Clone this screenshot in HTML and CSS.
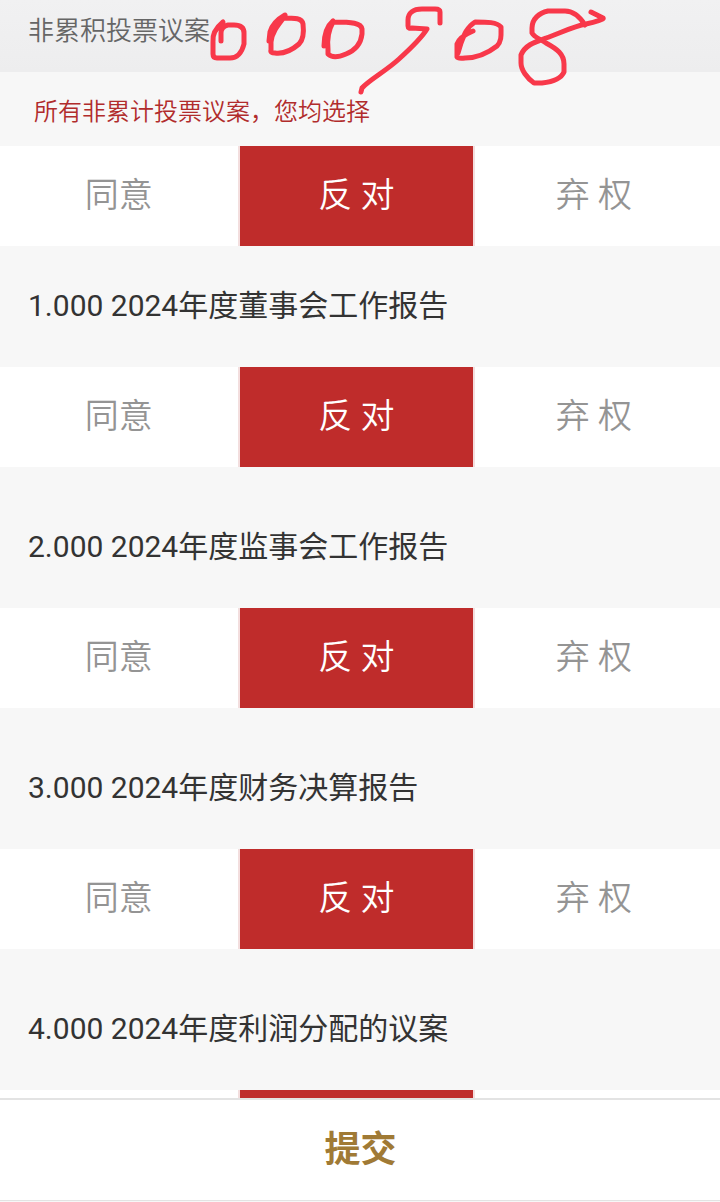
FILE: index.html
```html
<!DOCTYPE html>
<html lang="zh-CN">
<head>
    <meta charset="UTF-8">
    <meta name="viewport" content="width=device-width, initial-scale=1.0">
    <title>非累积投票议案</title>
    <link rel="stylesheet" href="styles.css">
</head>
<body>

    <div class="page">
        <div class="header">非累积投票议案</div>
        <div class="notice">所有非累计投票议案，您均选择</div>

        <div class="options">
            <div class="option">同意</div>
            <div class="option selected">反 对</div>
            <div class="option">弃 权</div>
        </div>

        <div class="title first">1.000 2024年度董事会工作报告</div>
        <div class="options">
            <div class="option">同意</div>
            <div class="option selected">反 对</div>
            <div class="option">弃 权</div>
        </div>

        <div class="title">2.000 2024年度监事会工作报告</div>
        <div class="options">
            <div class="option">同意</div>
            <div class="option selected">反 对</div>
            <div class="option">弃 权</div>
        </div>

        <div class="title">3.000 2024年度财务决算报告</div>
        <div class="options">
            <div class="option">同意</div>
            <div class="option selected">反 对</div>
            <div class="option">弃 权</div>
        </div>

        <div class="title">4.000 2024年度利润分配的议案</div>
        <div class="options cut">
            <div class="option"></div>
            <div class="option selected"></div>
            <div class="option"></div>
        </div>

        <div class="submit">提交</div>

        <!-- 手写标记 -->
        <svg class="mark" width="720" height="110" viewBox="0 0 720 110">
            <path d="M223 22 C217 27 212 34 213 42 L213 54 Q213 58 217 58 L230 58 C238 58 242 52 244 44 L244 33 C244 27 240 25 234 25 L228 25 C223 26 221 29 221 33 L221 41"/>
            <path d="M285 15 C278 19 272 25 270 32 L269 41 M285 16 C278 25 272 32 271 42 L271 50 Q270 53 275 53 C283 54 291 51 299 44 C304 39 304 32 303 24 C302 18 296 18 281 18"/>
            <path d="M333 21 C326 27 324 35 324 46 M333 22 C328 31 327 40 328 49 L328 54 C332 58 339 57 346 54 C356 50 361 43 362 34 L362 29 C361 23 352 22 334 22"/>
            <path d="M440 23 L440 12 Q440 9 435 9 L422 9 C413 9 408 13 408 20 L408 26 Q408 29 412 28 L427 29 C421 39 410 49 399 59 C386 71 369 80 362 88 L361 92"/>
            <path d="M473 31 C466 34 459 38 457 44 L457 57 Q458 59 465 58 C476 58 488 53 497 46 C502 41 501 34 501 27 C497 22 487 22 475 22 C467 27 464 35 461 43 L458 53"/>
            <path d="M585 25 C580 17 574 11 565 11 L548 11 C539 13 532 19 532 28 L532 33 C534 37 540 39 546 43 C557 49 564 54 564 64 L564 72 C561 79 551 82 542 83 L534 83 C527 78 521 70 521 63 L521 55 C525 45 535 42 546 38 C558 34 574 26 586 24 C595 22 605 19 603 18 L591 12"/>
        </svg>
    </div>

</body>
</html>
```

FILE: styles.css
```css
body {
    margin: 0;
    background-color: #f7f7f7;
    font-family: Roboto, "Noto Sans CJK SC", sans-serif;
}

.page {
    position: relative;
    height: 1202px;
    overflow: hidden;
}

.header {
    height: 72px;
    box-sizing: border-box;
    padding: 11px 28px 0;
    background: linear-gradient(#f1f1f2, #ededee);
    color: #666;
    font-size: 26px;
    font-weight: 350;
    line-height: 40px;
}

.notice {
    height: 74px;
    box-sizing: border-box;
    padding-left: 34px;
    color: #b12c2c;
    font-size: 24px;
    font-weight: 350;
    line-height: 80px;
}

.options {
    display: flex;
    height: 100px;
    background-color: #fff;
}

.option {
    width: 33%;
    box-sizing: border-box;
    color: #949494;
    font-size: 34px;
    font-weight: 350;
    line-height: 98px;
    text-align: center;
}

.option.selected {
    background-color: #bf2c2b;
    border: solid #f3dede;
    border-width: 0 2px;
    color: #fff;
}

.options.cut {
    height: 8px;
}

.title {
    height: 141px;
    box-sizing: border-box;
    padding: 60px 28px 0;
    color: #333;
    font-size: 30px;
    line-height: 40px;
}

.title.first {
    height: 121px;
    padding-top: 40px;
}

.submit {
    height: 103px;
    box-sizing: border-box;
    padding-left: 1px;
    border-top: 2px solid #e3e3e3;
    border-bottom: 1px solid #e3e3e3;
    background-color: #fff;
    color: #a07a35;
    font-size: 36px;
    font-weight: bold;
    line-height: 100px;
    text-align: center;
}

.mark {
    position: absolute;
    top: 0;
    left: 0;
    fill: none;
    stroke: #f8384a;
    stroke-width: 5;
    stroke-linecap: round;
    stroke-linejoin: round;
}
```
